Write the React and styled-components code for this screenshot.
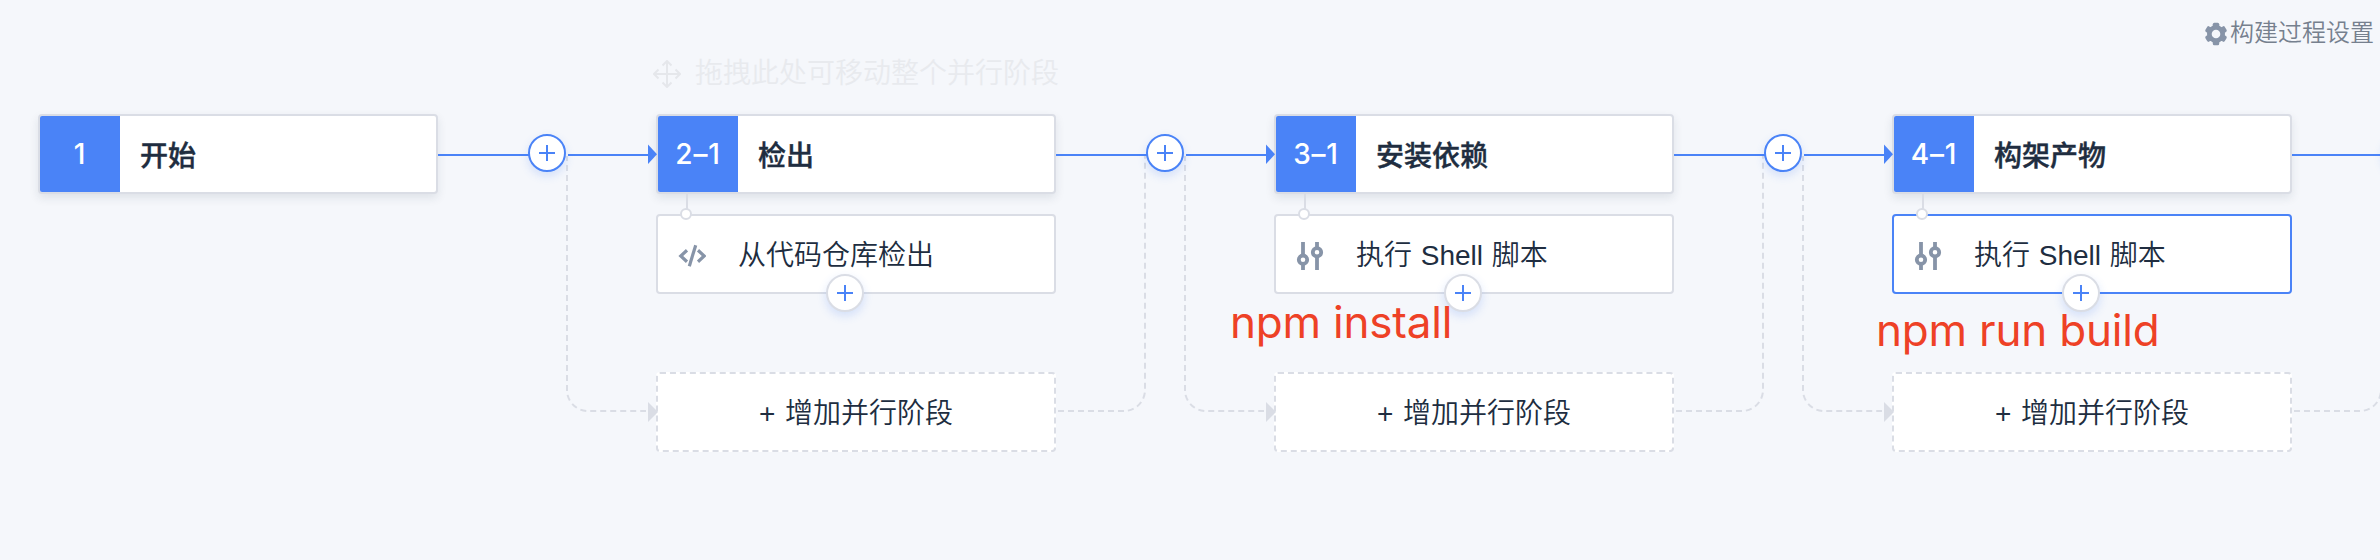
import React from "react";
import styled, { createGlobalStyle } from "styled-components";

const blue = "#4a83f7";
const line = "#dadde5";
const ink = "#202d40";
const muted = "#8794a8";

const GlobalStyle = createGlobalStyle`
  * { box-sizing: border-box; }
  body { margin: 0; background: #f5f7fb; }
`;

const Page = styled.main`
  position: relative;
  width: 2380px;
  height: 560px;
  overflow: hidden;
  background: #f5f7fb;
  color: ${ink};
  font-family: "Liberation Sans", "Noto Sans CJK SC", sans-serif;
  font-size: 28px;
  font-weight: 350;
`;

const Toolbar = styled.header`
  display: flex;
  justify-content: flex-end;
  height: 114px;
  padding: 11px 6px 0 0;
`;

const SettingsButton = styled.button`
  display: flex;
  align-items: center;
  gap: 2px;
  height: 40px;
  padding: 0;
  border: 0;
  background: none;
  color: #76808e;
  font: 350 24px/40px "Noto Sans CJK SC", sans-serif;
  svg { margin-top: 6px; }
`;

const Pipeline = styled.div`
  display: flex;
  align-items: flex-start;
  width: 2600px;
  padding-left: 38px;
`;

const Stage = styled.section`
  position: relative;
  flex: none;
  width: 400px;
`;

const DragHint = styled.div`
  position: absolute;
  left: -3px;
  top: -60px;
  display: flex;
  align-items: center;
  gap: 14px;
  height: 40px;
  white-space: nowrap;
  color: #e8eaee;
  font-size: 28px;
  line-height: 40px;
`;

const StageCard = styled.div`
  display: flex;
  height: 80px;
  border: 2px solid ${line};
  border-radius: 4px;
  background: #fff;
  box-shadow: 0 4px 10px rgba(32, 45, 64, 0.1);
  overflow: hidden;
`;

const StageNumber = styled.div`
  width: 80px;
  background: ${blue};
  color: #fff;
  font: 500 28px/77px Inter, sans-serif;
  letter-spacing: 0.8px;
  text-align: center;
`;

const StageTitle = styled.div`
  padding-left: 20px;
  font-weight: 500;
  font-family: "Noto Sans CJK SC", sans-serif;
  -webkit-text-stroke: 0.4px ${ink};
  line-height: 76px;
`;

const StepLink = styled.div`
  position: relative;
  width: 2px;
  height: 20px;
  margin-left: 30px;
  background: ${line};
`;

const LinkDot = styled.i`
  position: absolute;
  z-index: 1;
  left: -6px;
  top: 14px;
  width: 12px;
  height: 12px;
  border: 2px solid ${line};
  border-radius: 50%;
  background: #fff;
`;

const StepCard = styled.div`
  position: relative;
  display: flex;
  align-items: center;
  height: 80px;
  padding-left: 20px;
  border: 2px solid ${(p) => (p.$selected ? blue : line)};
  border-radius: 4px;
  background: #fff;
`;

const StepIcon = styled.span`
  display: flex;
  width: 60px;
  padding-top: 4px;
`;

const StepName = styled.span`
  padding-top: 3px;
  line-height: 73px;
  white-space: pre;
  word-spacing: 1px;
`;

const AddCircle = styled.button`
  position: absolute;
  z-index: 2;
  left: ${(p) => p.$x}px;
  top: ${(p) => p.$y}px;
  display: grid;
  place-items: center;
  width: 38px;
  height: 38px;
  padding: 0;
  border: 2px solid ${(p) => (p.$primary ? blue : line)};
  border-radius: 50%;
  background: #fff;
  box-shadow: 0 4px 10px rgba(74, 131, 247, 0.2);
`;

const AddParallel = styled.div`
  height: 80px;
  margin-top: 78px;
  border: 2px dashed ${line};
  border-radius: 4px;
  background: #fff;
  line-height: 79px;
  text-align: center;
  white-space: pre;
  word-spacing: 2px;
`;

const Link = styled.div`
  position: relative;
  z-index: 1;
  flex: none;
  width: 218px;
  height: 340px;
`;

const Wires = styled.svg`
  display: block;
  overflow: visible;
`;

const Note = styled.div`
  position: absolute;
  z-index: 3;
  left: ${(p) => p.$x}px;
  top: ${(p) => p.$y}px;
  color: #ee4126;
  font: 400 44px/56px Inter, sans-serif;
  letter-spacing: -0.2px;
  white-space: pre;
`;

const Plus = () => (
  <svg width="16" height="16" viewBox="0 0 16 16" fill={blue}>
    <path d="M7 0h2v16H7zM0 7h16v2H0z" />
  </svg>
);

const CodeIcon = () => (
  <svg width="28" height="24" viewBox="0 0 28 24" fill="none" stroke={muted} strokeWidth="3.2">
    <path d="M9 6.3 2.8 12 9 17.7M20 6.3 26.2 12 20 17.7" />
    <path d="M17.7 1.2 11.3 22.2" />
  </svg>
);

const SlidersIcon = () => (
  <svg width="28" height="28" viewBox="0 0 28 28" fill="none" stroke={muted} strokeWidth="3.8">
    <path d="M7 0v13M7 22v6M21 0v6M21 15v13" />
    <circle cx="7" cy="17.7" r="4.2" />
    <circle cx="21" cy="10.3" r="4.2" />
  </svg>
);

const MoveIcon = () => (
  <svg width="28" height="28" viewBox="0 0 28 28" fill="none" stroke="#e5e7eb" strokeWidth="2">
    <path d="M14 1v26M1 14h26M9.5 5.5 14 1l4.5 4.5M9.5 22.5 14 27l4.5-4.5M5.5 9.5 1 14l4.5 4.5M22.5 9.5 27 14l-4.5 4.5" />
  </svg>
);

const GearIcon = () => (
  <svg width="24" height="24" viewBox="0 0 24 24">
    <g fill={muted}>
      <circle cx="12" cy="12" r="9" />
      {[0, 60, 120].map((a) => (
        <rect key={a} x="8.8" y="0.8" width="6.4" height="22.4" rx="1.5" transform={`rotate(${a} 12 12)`} />
      ))}
    </g>
    <circle cx="12" cy="12" r="4.3" fill="#f5f7fb" />
  </svg>
);

function Connector({ first }) {
  return (
    <Link>
      <Wires width="218" height="340" viewBox="0 0 218 340" fill="none">
        {!first && (
          <path d="M2 297H68A21 21 0 0 0 89 276V42" stroke={line} strokeWidth="2" strokeDasharray="6 4" />
        )}
        <path d="M129 42V276A21 21 0 0 0 150 297H208" stroke={line} strokeWidth="2" strokeDasharray="6 4" strokeDashoffset="1" />
        <path d="M210 288v20l10-10z" fill={line} />
        <path d="M0 41H92M130 41H212" stroke={blue} strokeWidth="2" />
        <path d="M210 30.5v19.5l9-9.75z" fill={blue} />
      </Wires>
      <AddCircle $primary $x={90} $y={20}><Plus /></AddCircle>
    </Link>
  );
}

function ParallelStage({ number, title, step, icon, selected, hint }) {
  return (
    <Stage>
      {hint && <DragHint><MoveIcon /><span>拖拽此处可移动整个并行阶段</span></DragHint>}
      <StageCard><StageNumber>{number}</StageNumber><StageTitle>{title}</StageTitle></StageCard>
      <StepLink><LinkDot /></StepLink>
      <StepCard $selected={selected}>
        <StepIcon>{icon}</StepIcon>
        <StepName>{step}</StepName>
        <AddCircle $x={168} $y={58}><Plus /></AddCircle>
      </StepCard>
      <AddParallel>+ 增加并行阶段</AddParallel>
    </Stage>
  );
}

export default function App() {
  return (
    <Page>
      <GlobalStyle />
      <Toolbar>
        <SettingsButton><GearIcon />构建过程设置</SettingsButton>
      </Toolbar>
      <Pipeline>
        <Stage>
          <StageCard><StageNumber>1</StageNumber><StageTitle>开始</StageTitle></StageCard>
        </Stage>
        <Connector first />
        <ParallelStage number="2–1" title="检出" step="从代码仓库检出" icon={<CodeIcon />} hint />
        <Connector />
        <ParallelStage number="3–1" title="安装依赖" step="执行 Shell 脚本" icon={<SlidersIcon />} />
        <Connector />
        <ParallelStage number="4–1" title="构架产物" step="执行 Shell 脚本" icon={<SlidersIcon />} selected />
        <Connector />
      </Pipeline>
      <Note $x={1230} $y={294}>npm install</Note>
      <Note $x={1876} $y={302}>npm run build</Note>
    </Page>
  );
}
